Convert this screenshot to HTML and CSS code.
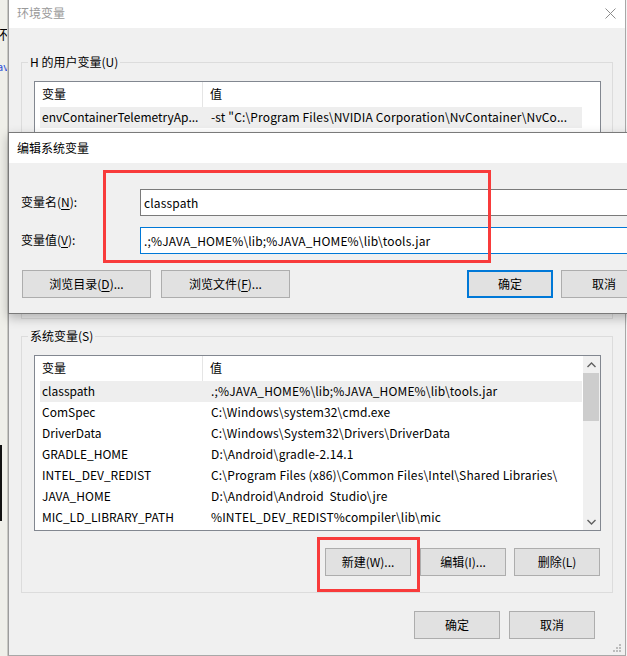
FILE: index.html
```html
<!DOCTYPE html>
<html lang="zh-CN">
<head>
<meta charset="utf-8">
<title>环境变量</title>
<link rel="stylesheet" href="styles.css">
</head>
<body>
<div class="screen">
  <div class="behind">
    <span class="behind-glyph">环</span>
    <span class="behind-link">av</span>
    <span class="behind-bar"></span>
  </div>

  <div class="win">
    <div class="titlebar">
      <span class="title">环境变量</span>
      <svg class="close" width="11" height="11" viewBox="0 0 11 11"><path d="M0.5 0.5 L10.5 10.5 M10.5 0.5 L0.5 10.5" stroke="#8c8c8c" stroke-width="1" fill="none"/></svg>
    </div>
    <div class="win-body">
      <fieldset class="group group-user">
        <legend>H 的用户变量(U)</legend>
        <div class="listbox listbox-user">
          <div class="lv-main">
            <div class="lv-head"><div class="hc1">变量</div><div class="hc2">值</div></div>
            <div class="lv-row sel"><div class="c1">envContainerTelemetryAp...</div><div class="c2">-st "C:\Program Files\NVIDIA Corporation\NvContainer\NvCo...</div></div>
          </div>
        </div>
      </fieldset>

      <fieldset class="group group-sys">
        <legend>系统变量(S)</legend>
        <div class="listbox listbox-sys">
          <div class="lv-main">
            <div class="lv-head"><div class="hc1">变量</div><div class="hc2">值</div></div>
            <div class="lv-row sel"><div class="c1">classpath</div><div class="c2">.;%JAVA_HOME%\lib;%JAVA_HOME%\lib\tools.jar</div></div>
            <div class="lv-row"><div class="c1">ComSpec</div><div class="c2">C:\Windows\system32\cmd.exe</div></div>
            <div class="lv-row"><div class="c1">DriverData</div><div class="c2">C:\Windows\System32\Drivers\DriverData</div></div>
            <div class="lv-row"><div class="c1">GRADLE_HOME</div><div class="c2">D:\Android\gradle-2.14.1</div></div>
            <div class="lv-row"><div class="c1">INTEL_DEV_REDIST</div><div class="c2">C:\Program Files (x86)\Common Files\Intel\Shared Libraries\</div></div>
            <div class="lv-row"><div class="c1">JAVA_HOME</div><div class="c2">D:\Android\Android&nbsp; Studio\jre</div></div>
            <div class="lv-row"><div class="c1">MIC_LD_LIBRARY_PATH</div><div class="c2">%INTEL_DEV_REDIST%compiler\lib\mic</div></div>
          </div>
          <div class="vscroll">
            <div class="sb-btn"><svg width="9" height="6" viewBox="0 0 9 6"><path d="M0.5 5 L4.5 1 L8.5 5" stroke="#606060" stroke-width="1.4" fill="none"/></svg></div>
            <div class="sb-track"><div class="sb-thumb"></div></div>
            <div class="sb-btn"><svg width="9" height="6" viewBox="0 0 9 6"><path d="M0.5 1 L4.5 5 L8.5 1" stroke="#606060" stroke-width="1.4" fill="none"/></svg></div>
          </div>
        </div>
        <div class="btn-row group-buttons">
          <button class="btn">新建(W)...</button>
          <button class="btn">编辑(I)...</button>
          <button class="btn">删除(L)</button>
        </div>
      </fieldset>

      <div class="btn-row footer">
        <button class="btn">确定</button>
        <button class="btn">取消</button>
      </div>
    </div>
    <svg class="grip" width="9" height="9" viewBox="0 0 9 9">
      <rect x="6" y="0" width="2" height="2" fill="#bcbcbc"/>
      <rect x="3" y="3" width="2" height="2" fill="#bcbcbc"/>
      <rect x="6" y="3" width="2" height="2" fill="#bcbcbc"/>
      <rect x="0" y="6" width="2" height="2" fill="#bcbcbc"/>
      <rect x="3" y="6" width="2" height="2" fill="#bcbcbc"/>
      <rect x="6" y="6" width="2" height="2" fill="#bcbcbc"/>
    </svg>
  </div>

  <div class="dialog">
    <div class="dlg-title">编辑系统变量</div>
    <div class="dlg-body">
      <div class="field-grid">
        <label class="field-label">变量名(<u>N</u>):</label>
        <input class="field-input" type="text" value="classpath" readonly>
        <label class="field-label">变量值(<u>V</u>):</label>
        <input class="field-input focused" type="text" value=".;%JAVA_HOME%\lib;%JAVA_HOME%\lib\tools.jar" readonly>
      </div>
      <div class="dlg-buttons">
        <button class="btn btn-wide">浏览目录(<u>D</u>)...</button>
        <button class="btn btn-wide">浏览文件(<u>F</u>)...</button>
        <span class="spacer"></span>
        <button class="btn btn-default">确定</button>
        <button class="btn">取消</button>
      </div>
    </div>
  </div>

  <div class="highlight hl-inputs"></div>
  <div class="highlight hl-new"></div>
</div>
</body>
</html>
```

FILE: styles.css
```css
* { box-sizing: border-box; }

html, body {
  margin: 0;
  padding: 0;
}

body {
  width: 627px;
  height: 656px;
  overflow: hidden;
  background: #f3f3f3;
  font-family: "Noto Sans CJK SC", "Noto Sans", sans-serif;
  font-size: 12px;
  color: #000;
}

.screen {
  position: relative;
  display: flex;
  width: 627px;
  height: 656px;
  overflow: hidden;
}

/* window behind, visible as a thin strip */
.behind {
  position: relative;
  flex: none;
  width: 8px;
  height: 656px;
  background: #efefe9;
  border-right: 1px solid #c8c8c2;
  overflow: hidden;
}
.behind-glyph {
  position: absolute;
  left: -5px;
  top: 26px;
  font-size: 13px;
  line-height: 16px;
}
.behind-link {
  position: absolute;
  left: -3px;
  top: 60px;
  font-size: 11px;
  line-height: 12px;
  color: #2b4fd8;
}
.behind-bar {
  position: absolute;
  left: 0;
  top: 445px;
  width: 2px;
  height: 76px;
  background: #111;
}

/* main window */
.win {
  position: relative;
  flex: none;
  width: 618px;
  height: 656px;
  background: #f0f0f0;
  border-left: 1px solid #9c9c9c;
  border-right: 1px solid #a8a8a8;
  border-bottom: 1px solid #a8a8a8;
  display: flex;
  flex-direction: column;
}

.titlebar {
  height: 28px;
  background: #fff;
  display: flex;
  align-items: center;
  justify-content: space-between;
  padding: 0 9px 3px 8px;
}
.title {
  color: #999;
  line-height: 16px;
}
.close { display: block; margin-top: 2px; }

.win-body {
  display: flex;
  flex-direction: column;
  padding: 0 0 0 12px;
}

.group {
  margin: 0;
  padding: 11px 11px 4px 12px;
  border: 1px solid #dcdcdc;
  width: 592px;
  min-width: 0;
}
.group legend {
  padding: 0 2px;
  margin-left: -6px;
  line-height: 16px;
  height: 16px;
}
.group-user { margin-top: 26px; }
.group-sys {
  margin-top: 9px;
  padding-top: 11px;
  padding-bottom: 16px;
}

/* list views */
.listbox {
  display: flex;
  background: #fff;
  border: 1px solid #828790;
  width: 567px;
}
.listbox-user { height: 233px; }
.listbox-sys { height: 176px; }

.lv-main {
  flex: 1;
  display: flex;
  flex-direction: column;
  overflow: hidden;
}

.lv-head {
  display: grid;
  grid-template-columns: 168px 1fr;
  height: 25px;
  line-height: 24px;
  flex: none;
}
.hc1 {
  padding-left: 7px;
  border-right: 1px solid #e5e5e5;
}
.hc2 { padding-left: 7px; }

.lv-row {
  display: grid;
  grid-template-columns: 163px 1fr;
  height: 21px;
  line-height: 20px;
  margin: 0 1px 0 5px;
  white-space: nowrap;
  flex: none;
}
.lv-row.sel { background: #eeeeee; }
.c1 { padding-left: 2px; overflow: hidden; }
.c2 { padding-left: 8px; overflow: hidden; letter-spacing: 0.15px; }

.listbox-user .lv-main { border-right: 17px solid #fff; }

.vscroll {
  width: 17px;
  flex: none;
  display: flex;
  flex-direction: column;
  background: #f0f0f0;
  padding-right: 1px;
}
.sb-btn {
  height: 17px;
  display: flex;
  align-items: center;
  justify-content: center;
}
.sb-btn svg { display: block; }
.sb-track { flex: 1; }
.sb-thumb {
  height: 48px;
  background: #cdcdcd;
}

/* buttons */
.btn {
  font: inherit;
  color: #000;
  height: 28px;
  width: 86px;
  padding: 0;
  background: #e1e1e1;
  border: 1px solid #adadad;
  border-radius: 0;
  line-height: 26px;
  white-space: nowrap;
}
.btn u { text-underline-offset: 2px; }

.btn-row {
  display: flex;
  justify-content: flex-end;
  gap: 9px;
}
.group-buttons {
  margin-top: 17px;
  padding-right: 1px;
}
.group-buttons .btn + .btn + .btn { margin-left: -1px; }

.footer {
  margin-top: 18px;
  padding-right: 30px;
}

.grip {
  position: absolute;
  right: 3px;
  bottom: 2px;
}

/* edit dialog (overlays the main window) */
.dialog {
  position: absolute;
  left: 8px;
  top: 132px;
  width: 653px;
  height: 182px;
  background: #f0f0f0;
  border: 1px solid #7a7a7a;
  box-shadow: 0 4px 10px rgba(0, 0, 0, 0.26);
  display: flex;
  flex-direction: column;
}
.dlg-title {
  height: 30px;
  line-height: 30px;
  background: #fff;
  padding-left: 8px;
  flex: none;
}
.dlg-body {
  padding: 26px 13px 0 13px;
}
.field-grid {
  display: grid;
  grid-template-columns: 118px 1fr;
  row-gap: 11px;
  align-items: center;
}
.field-label {
  margin-left: -1px;
  line-height: 16px;
  margin-bottom: 1px;
}
.field-label u { text-underline-offset: 2px; }
.field-input {
  font: inherit;
  color: #000;
  height: 27px;
  width: 100%;
  padding: 0 3px 1px;
  margin: 0;
  border: 1px solid #7a7a7a;
  background: #fff;
  outline: none;
  letter-spacing: 0.15px;
}
.field-input.focused { border-color: #0078d7; }

.dlg-buttons {
  display: flex;
  margin-top: 16px;
  gap: 8px;
}
.btn-wide { width: 129px; }
.btn-wide + .btn-wide { margin-left: 2px; }
.spacer { flex: 1; }
.btn-default {
  border: 2px solid #0078d7;
  line-height: 24px;
}

/* red annotation boxes */
.highlight {
  position: absolute;
  border: 3px solid #f83b3b;
}
.hl-inputs {
  left: 103px;
  top: 170px;
  width: 388px;
  height: 93px;
}
.hl-new {
  left: 317px;
  top: 537px;
  width: 103px;
  height: 55px;
}
```
